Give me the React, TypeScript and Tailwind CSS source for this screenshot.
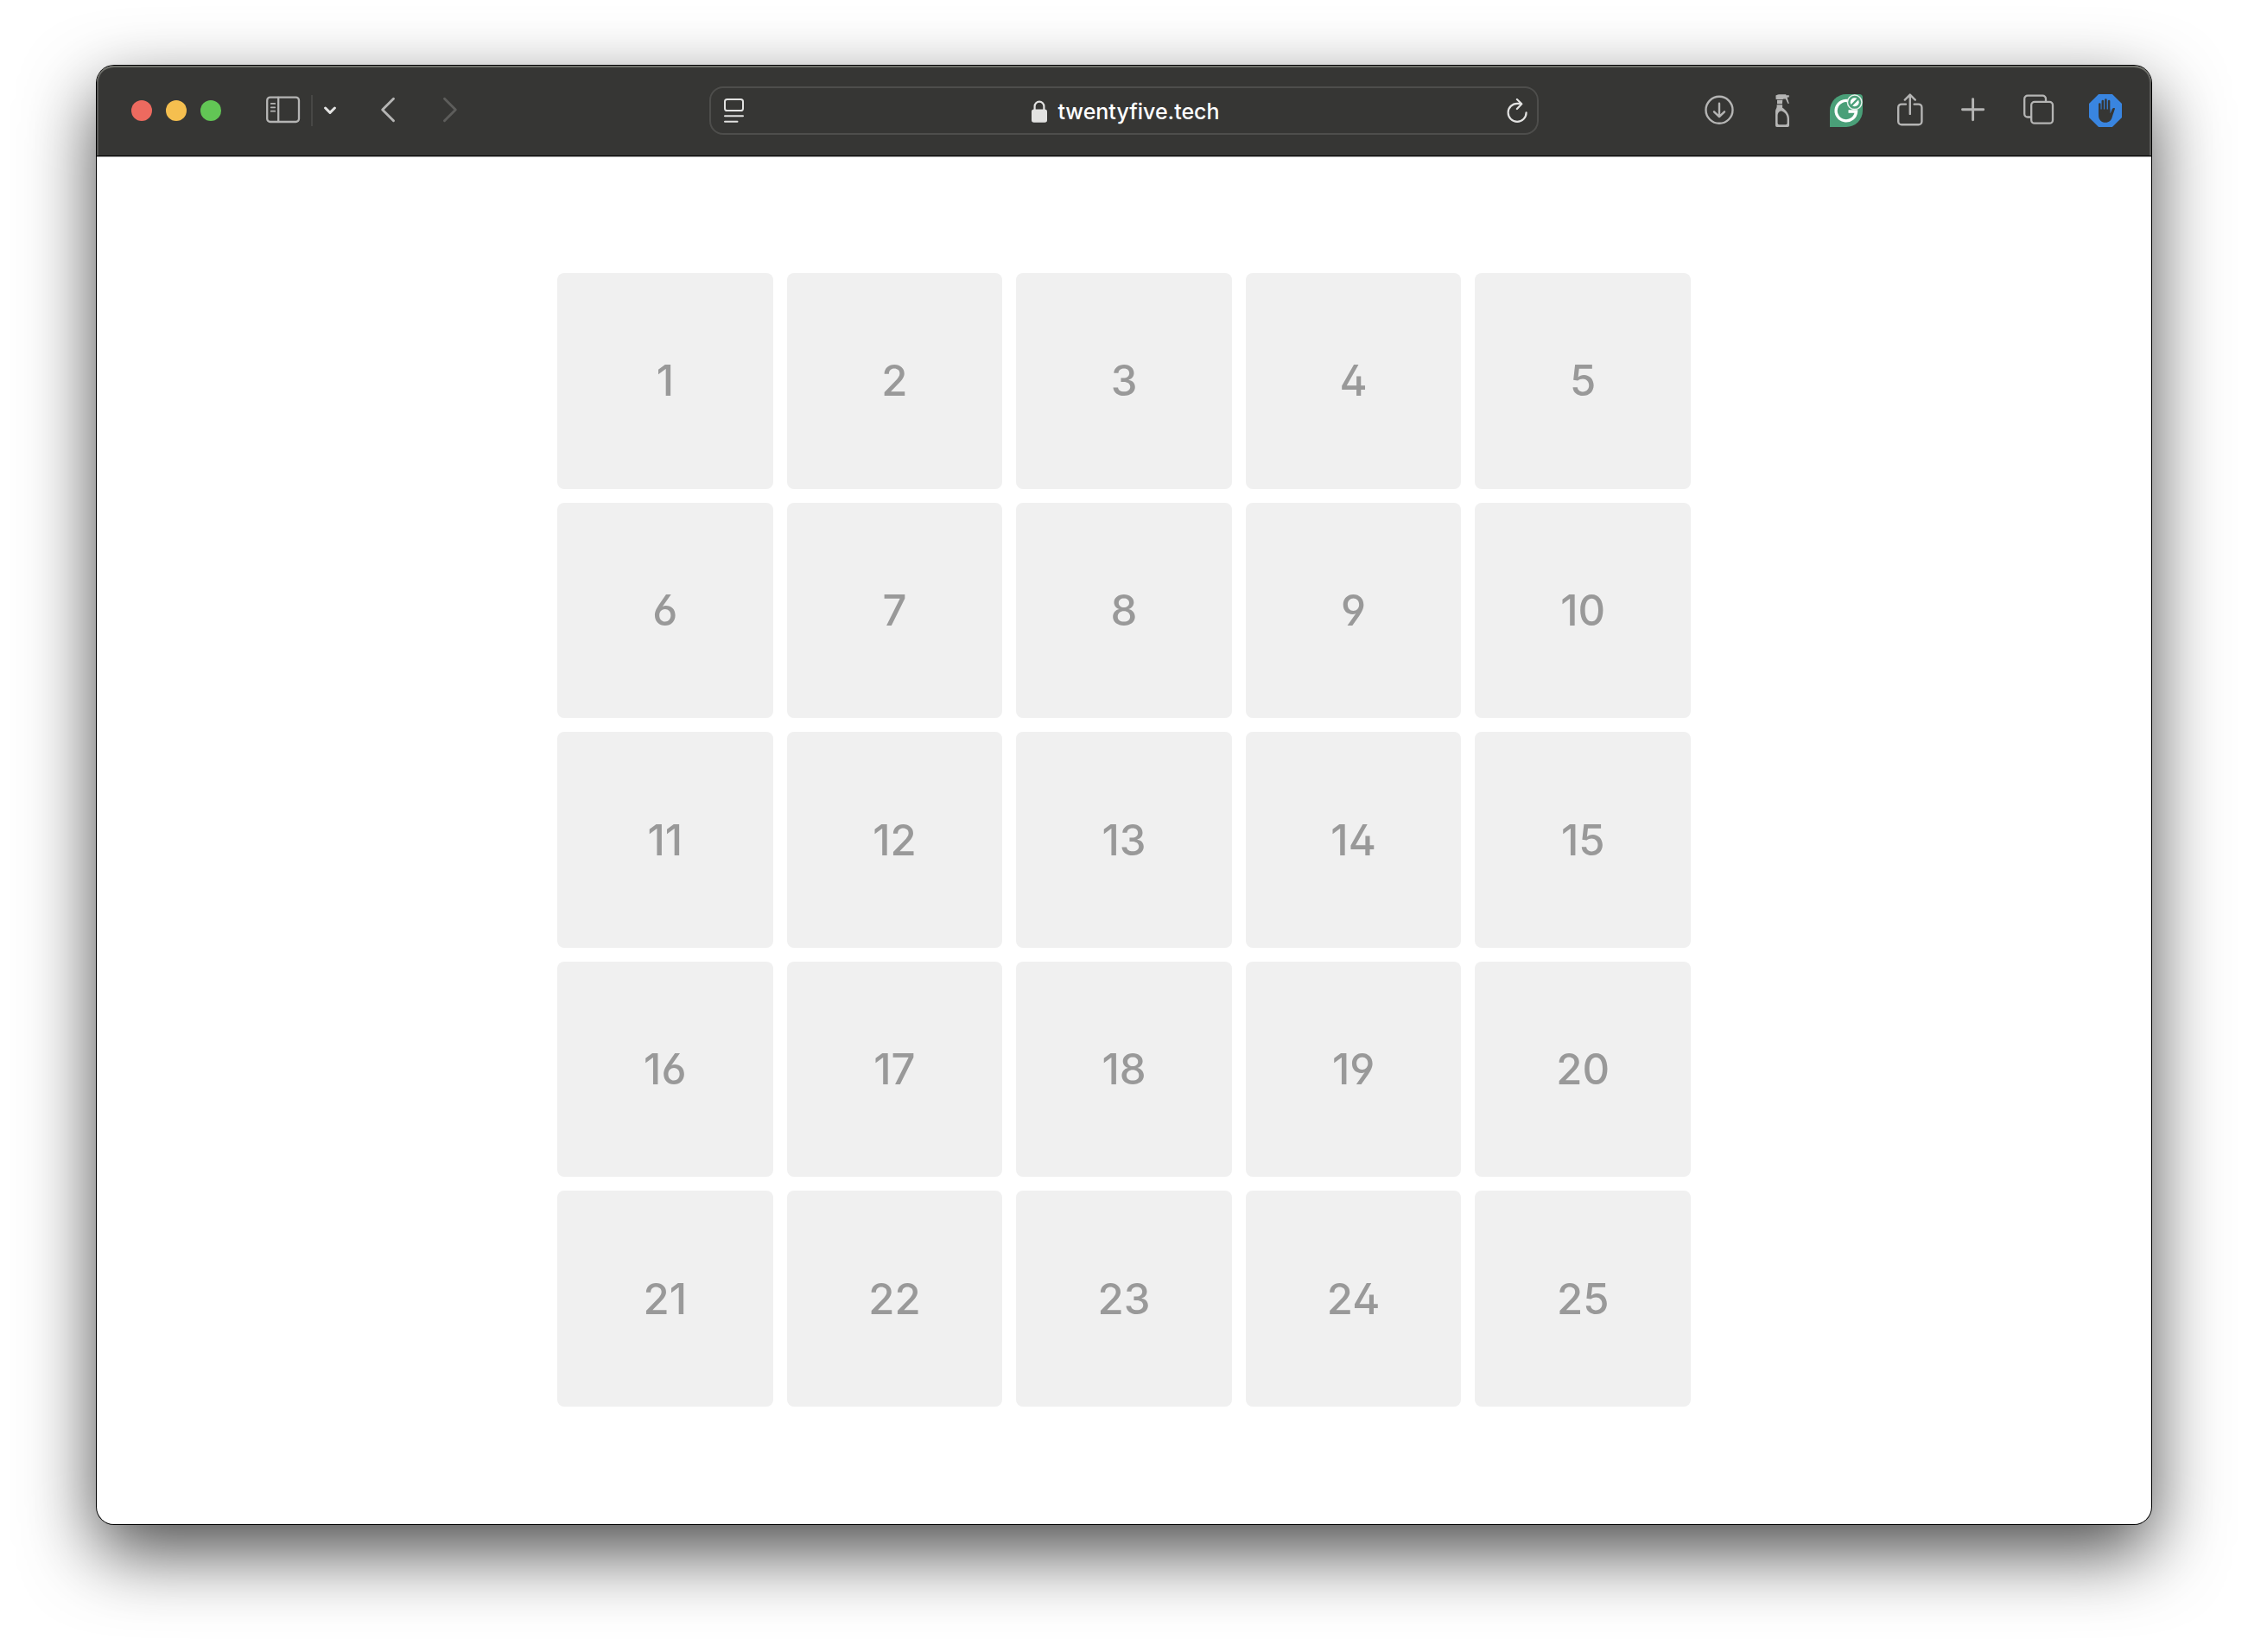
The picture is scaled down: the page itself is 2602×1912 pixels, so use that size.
import type { ReactNode } from "react";

const cells = Array.from({ length: 25 }, (_, i) => i + 1);

function IconButton({ label, className, children }: { label: string; className: string; children: ReactNode }) {
  return (
    <button type="button" aria-label={label} className={`flex shrink-0 items-center justify-center ${className}`}>
      {children}
    </button>
  );
}

function Toolbar() {
  return (
    <header className="grid h-[105px] grid-cols-[1fr_960px_1fr] items-center rounded-t-[20px] border-b border-b-black bg-[#363634] text-[#b5b5b4] shadow-[inset_0_2px_0_#70716b,inset_2px_0_0_#5b5b59,inset_-2px_0_0_#5b5b59]">
      <div className="flex items-center pl-10">
        <div className="flex gap-4">
          <button type="button" aria-label="Close" className="size-6 rounded-full bg-[#ed6a5f]" />
          <button type="button" aria-label="Minimize" className="size-6 rounded-full bg-[#f5bf4f]" />
          <button type="button" aria-label="Zoom" className="size-6 rounded-full bg-[#62c655]" />
        </div>
        <IconButton label="Show sidebar" className="ml-[52px] pb-0.5">
          <svg width="40" height="32" viewBox="0 0 40 32" fill="none" stroke="currentColor" strokeWidth="2.3" strokeLinecap="round">
            <rect x="1.2" y="1.6" width="36.800" height="28.4" rx="3.6" />
            <path d="M14.2 1.800v28" />
            <path d="M5.8 8.900h4.400M5.8 13.300h4.400M5.8 17.700h4.400" strokeWidth="1.8" />
          </svg>
        </IconButton>
        <span className="ml-3 h-9 w-0.5 bg-[#484846]" />
        <IconButton label="Tab groups" className="ml-[13px]">
          <svg width="14" height="10" viewBox="0 0 14 10" fill="none" stroke="#e3e3e2" strokeWidth="3" strokeLinecap="round" strokeLinejoin="round">
            <path d="M1.600 2L7 7.400 12.400 2" />
          </svg>
        </IconButton>
        <IconButton label="Back" className="ml-[51px] pb-0.5">
          <svg width="18" height="30" viewBox="0 0 18 30" fill="none" stroke="currentColor" strokeWidth="2.900" strokeLinecap="round" strokeLinejoin="round">
            <path d="M15.500 2.200L2.700 15l12.800 12.800" />
          </svg>
        </IconButton>
        <IconButton label="Forward" className="ml-[54px] pb-0.5">
          <svg width="18" height="30" viewBox="0 0 18 30" fill="none" stroke="#5d5d5b" strokeWidth="2.900" strokeLinecap="round" strokeLinejoin="round">
            <path d="M2.500 2.200L15.300 15 2.500 27.800" />
          </svg>
        </IconButton>
      </div>

      <div className="flex h-14 items-center justify-between rounded-[16px] border-2 border-[#4e4e4c] px-[15px] text-[#e2e2e1]">
        <IconButton label="Page menu" className="">
          <svg width="24" height="28" viewBox="0 0 24 28" fill="none" stroke="currentColor" strokeWidth="2" strokeLinecap="round">
            <rect x="1" y="1" width="21" height="13" rx="2.600" />
            <path d="M1 20.200h21M1 26.800h14.500" />
          </svg>
        </IconButton>
        <button type="button" className="flex items-center gap-3 pt-0.5 text-[25px] leading-8 font-medium text-white">
          <svg width="18" height="26" viewBox="0 0 18 26" fill="none">
            <path d="M3.600 12V7a5.400 5.400 0 0 1 10.800 0v5" stroke="#e2e2e1" strokeWidth="2.200" />
            <rect x="0" y="10.500" width="18" height="15.300" rx="2.800" fill="#e2e2e1" />
          </svg>
          twentyfive.tech
        </button>
        <IconButton label="Reload" className="-mr-1">
          <svg width="24" height="28" viewBox="0 0 24 28" fill="none" stroke="currentColor" strokeWidth="2.200" strokeLinecap="round" strokeLinejoin="round">
            <path d="M22.600 16.300a10.500 10.500 0 1 1-10.500-10.500h4.800M11.900 1l5.400 5.200-5.400 5.800" />
          </svg>
        </IconButton>
      </div>

      <div className="flex items-center justify-end pr-[34px]">
        <IconButton label="Downloads" className="pb-0.5">
          <svg width="34" height="34" viewBox="0 0 34 34" fill="none" stroke="currentColor" strokeWidth="2.400" strokeLinecap="round" strokeLinejoin="round">
            <circle cx="17" cy="17.300" r="15.500" />
            <path d="M17 9.800v15M11 19.300l6 5.800 6-5.800" />
          </svg>
        </IconButton>
        <IconButton label="Clean page" className="ml-12">
          <svg width="16" height="38" viewBox="0 0 16 38" fill="currentColor">
            <path d="M.4 1.400C2 .6 3.500.2 5.500.2h6.800v1h3.500v2.300h-2v1l2 6.200-1.300.2-2.700-5.400H9.500L8.600 5.900H.6z" />
            <path d="M2 6.700h6.300l-.4 4.600H2z" />
            <path fillRule="evenodd" d="M1.600 12.300h6.500v3.500c3.300 2 7.900 6.500 7.900 12.500v8a1.700 1.700 0 0 1-1.700 1.700H1.700A1.700 1.700 0 0 1 0 36.300V20c0-2.500 1.600-3.500 1.600-5.500zM4.300 20.500c-1 1-1.700 2.500-1.700 4v9a1.700 1.700 0 0 0 1.700 1.700h7.600a1.700 1.700 0 0 0 1.700-1.700v-5c0-4.500-2.600-7.500-5.400-8.600-1.400-.5-2.900-.4-3.900.6z" />
          </svg>
        </IconButton>
        <IconButton label="Grammarly" className="ml-[47px]">
          <svg width="38" height="38" viewBox="0 0 38 38" fill="none">
            <path d="M0 38V19A19 19 0 0 1 19 0h15a4 4 0 0 1 4 4v15a19 19 0 0 1-19 19z" fill="#4a9f78" />
            <path d="M23 8.200A11.700 11.700 0 1 0 30.500 20H21.500" stroke="#fff" strokeWidth="3.400" />
            <circle cx="28.700" cy="9.300" r="8.300" fill="#4a9f78" stroke="#e7f1ec" strokeWidth="1.500" />
            <circle cx="28.700" cy="9.300" r="5" fill="#fff" />
            <path d="M25 13l7.400-7.400" stroke="#4a9f78" strokeWidth="2.400" />
          </svg>
        </IconButton>
        <IconButton label="Share" className="ml-10 pb-0.5">
          <svg width="30" height="38" viewBox="0 0 30 38" fill="none" stroke="currentColor" strokeWidth="2.400" strokeLinecap="round" strokeLinejoin="round">
            <path d="M10 12.600H5a3.800 3.800 0 0 0-3.800 3.800v16.100A3.800 3.800 0 0 0 5 36.300h19.600a3.800 3.800 0 0 0 3.800-3.800V16.400a3.800 3.800 0 0 0-3.800-3.800h-5" />
            <path d="M14.800 23.900V1.800M8.800 7.600l6-6 6 6" />
          </svg>
        </IconButton>
        <IconButton label="New tab" className="ml-11 pb-0.5">
          <svg width="28" height="28" viewBox="0 0 28 28" fill="none" stroke="currentColor" strokeWidth="2.900" strokeLinecap="round">
            <path d="M13.600 1.600v24.200M1.500 13.700h24.200" />
          </svg>
        </IconButton>
        <IconButton label="Tab overview" className="ml-11 pb-0.5">
          <svg width="36" height="36" viewBox="0 0 36 36" fill="none" stroke="currentColor" strokeWidth="2.300">
            <rect x="9.200" y="8.900" width="24.800" height="24.800" rx="3.800" />
            <path d="M9.200 26.500H5a3.800 3.800 0 0 1-3.800-3.800V5.400A3.800 3.800 0 0 1 5 1.600h17.200A3.800 3.800 0 0 1 26 5.400v3.500" />
          </svg>
        </IconButton>
        <IconButton label="Content blocker" className="ml-10">
          <svg width="38" height="38" viewBox="0 0 38 38">
            <path d="M11.100 0h15.800L38 11.100v15.800L26.900 38H11.100L0 26.900V11.100z" fill="#3985e0" />
            <path d="M12.300 11.400V22M15.800 8V20M19.400 6.500V20M23.100 8V20" stroke="#363634" strokeWidth="2.500" strokeLinecap="round" fill="none" />
            <path d="M11.050 17.500h13.300v4.600c1.100-.6 1.500-3.200 2.400-4.900.8-1.500 3.600-1.700 3.200-.2-.6 2-2.200 6.200-3.100 9.300-1.100 4.200-3.500 6.500-7.800 6.500-5 0-8-3.300-8-8.300z" fill="#363634" />
          </svg>
        </IconButton>
      </div>
    </header>
  );
}

export default function App() {
  return (
    <div className="min-h-screen overflow-hidden bg-white px-28 pt-[76px] pb-[148px] font-['Inter',sans-serif]">
      <div className="rounded-[20px] bg-white shadow-[0_0_0_1px_#000,0_32px_84px_rgba(0,0,0,0.71)]">
        <Toolbar />
        <main className="border-t border-[#b8b8b8] px-8 pt-[134px] pb-[136px]">
          <div className="mx-auto grid max-w-[1312px] grid-cols-5 gap-4">
            {cells.map((n) => (
              <div
                key={n}
                className="flex aspect-square items-center justify-center rounded-lg bg-[#f0f0f0] text-[49px] leading-none font-medium text-[#999] [font-feature-settings:'cv02','cv03','cv04']"
              >
                {n}
              </div>
            ))}
          </div>
        </main>
      </div>
    </div>
  );
}
